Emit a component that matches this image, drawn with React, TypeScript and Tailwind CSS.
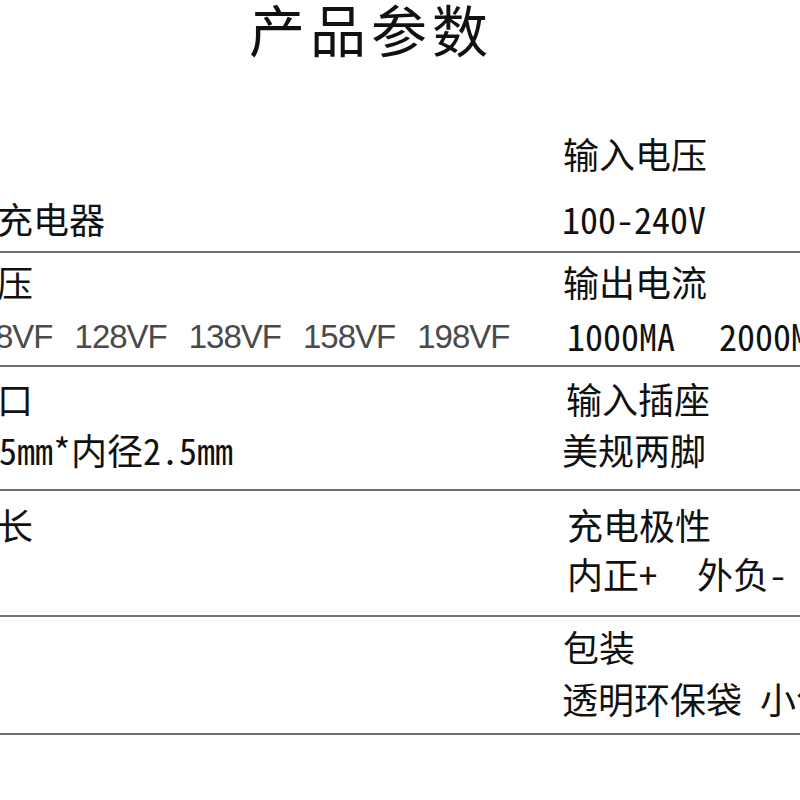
import React from 'react';

const cjk = "font-['Noto_Sans_Mono_CJK_SC','Noto_Sans_CJK_SC',sans-serif]";

interface ParamRowProps {
  height: string;
  pad: string;
  gap: string;
  left: React.ReactNode[];
  right: React.ReactNode[];
}

function Cell({ pad, gap, lines }: { pad: string; gap: string; lines: React.ReactNode[] }) {
  return (
    <div className={`flex flex-col overflow-hidden ${pad} ${gap}`}>
      {lines.map((line, i) => (
        <div key={i} className="h-[36px] leading-[36px] whitespace-pre">
          {line}
        </div>
      ))}
    </div>
  );
}

function ParamRow({ height, pad, gap, left, right }: ParamRowProps) {
  return (
    <div className={`grid grid-cols-[562px_1fr] border-b-2 border-[#707070] ${height}`}>
      <Cell pad={pad} gap={gap} lines={left} />
      <Cell pad={pad} gap={gap} lines={right} />
    </div>
  );
}

const voltages = ['8VF', '128VF', '138VF', '158VF', '198VF'];

export default function App() {
  return (
    <div className={`w-[800px] h-[800px] overflow-hidden bg-white text-[#111] text-[36px] ${cjk}`}>
      <h1 className="w-[742px] h-[60px] text-center text-[56px] leading-[56px] tracking-[5px] font-normal">
        产品参数
      </h1>

      <ParamRow
        height="h-[193px]"
        pad="pt-[75px]"
        gap="gap-[29px]"
        left={['', <span className="-ml-[3px]">充电器</span>]}
        right={[<span className="ml-[1px]">输入电压</span>, '100-240V']}
      />

      <ParamRow
        height="h-[114px]"
        pad="pt-[10px]"
        gap="gap-[18px]"
        left={[
          <span className="-ml-[3px]">压</span>,
          <span className="-ml-[5px] flex gap-[22px] font-['Liberation_Sans',sans-serif] text-[33px] leading-[40px] tracking-[-1px] text-[#4a4a4a]">
            {voltages.map((v) => (
              <span key={v}>{v}</span>
            ))}
          </span>,
        ]}
        right={[
          <span className="ml-[1px]">输出电流</span>,
          <span className="ml-[5px]">
            1000MA  <span className="ml-[8px]">2000MA</span>
          </span>,
        ]}
      />

      <ParamRow
        height="h-[124px]"
        pad="pt-[13px]"
        gap="gap-[15px]"
        left={[<span className="-ml-[3px]">口</span>, <span className="-ml-[1px]">5mm*内径2.5mm</span>]}
        right={[<span className="ml-[4px]">输入插座</span>, '美规两脚']}
      />

      <ParamRow
        height="h-[126px]"
        pad="pt-[15px]"
        gap="gap-[13px]"
        left={[<span className="-ml-[3px]">长</span>, '']}
        right={[
          <span className="ml-[5px]">充电极性</span>,
          <span className="ml-[5px]">
            内正+  <span className="ml-[4px]">外负-</span>
          </span>,
        ]}
      />

      <ParamRow
        height="h-[118px]"
        pad="pt-[11px]"
        gap="gap-[16px]"
        left={['', '']}
        right={[<span className="ml-[1px]">包装</span>, '透明环保袋 小包装']}
      />
    </div>
  );
}
